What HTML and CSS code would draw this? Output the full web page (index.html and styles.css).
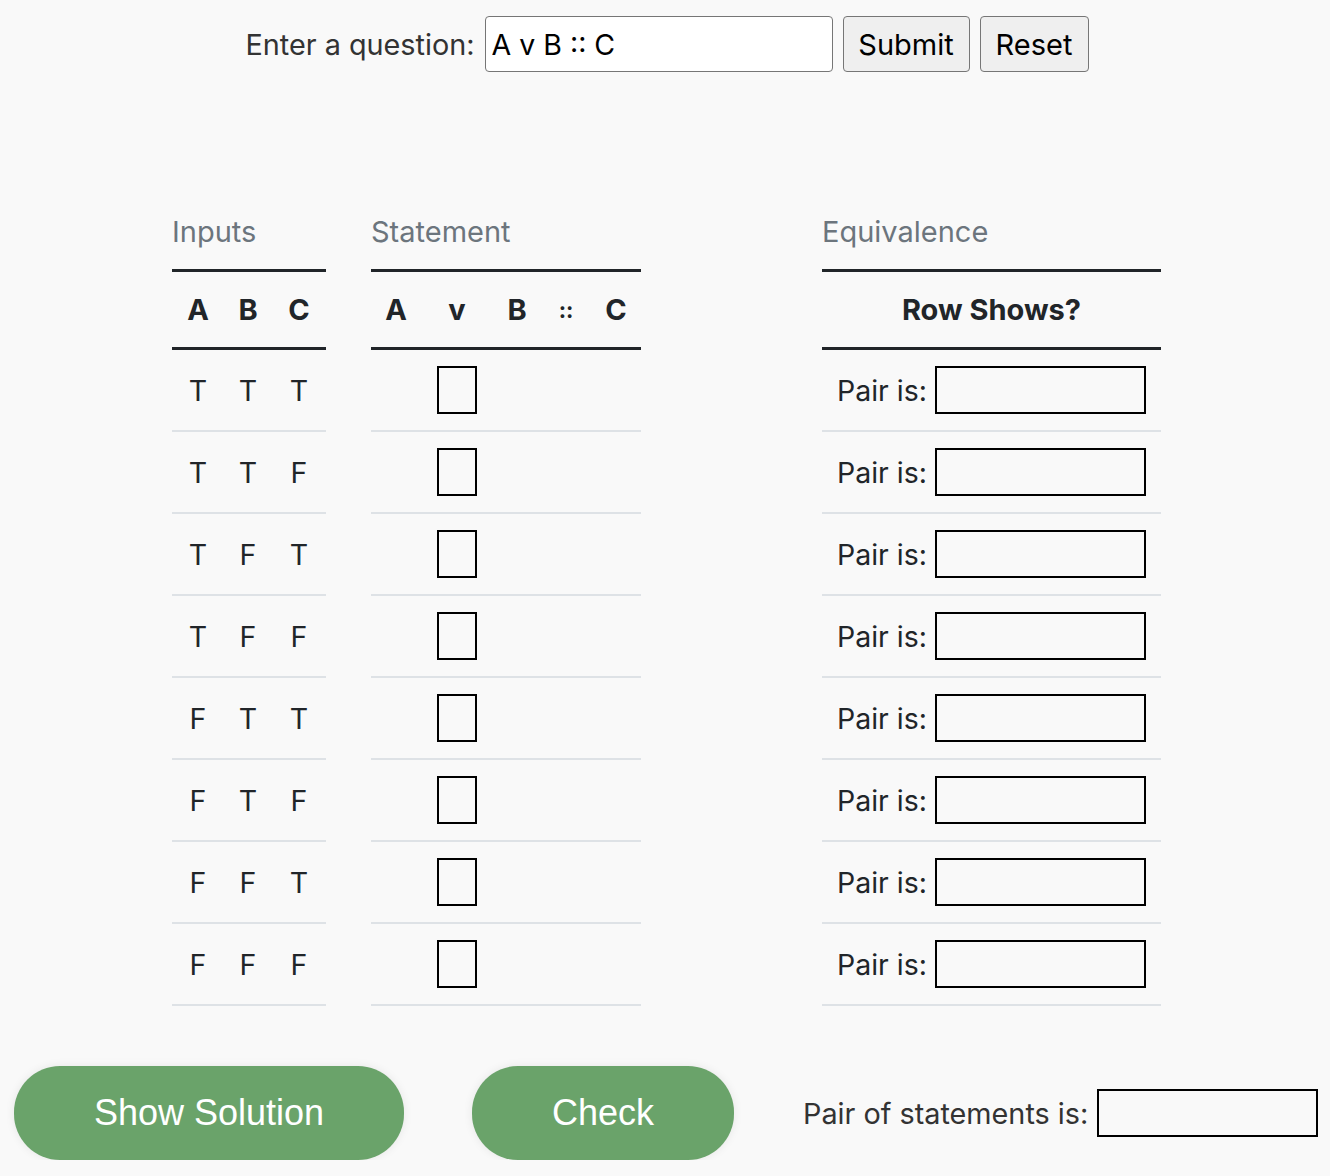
FILE: index.html
```html
<!DOCTYPE html>
<html lang="en">
<head>
<meta charset="utf-8">
<title>Truth Table</title>
<link rel="stylesheet" href="styles.css">
</head>
<body>
<form class="question-bar">
  <label class="question-label" for="q">Enter a question:</label>
  <input id="q" class="question-input" type="text" value="A v B :: C">
  <button type="button" class="plain-btn submit-btn">Submit</button>
  <button type="button" class="plain-btn reset-btn">Reset</button>
</form>

<div class="tables">
  <section class="panel panel-inputs">
    <h2 class="panel-title">Inputs</h2>
    <table class="tt">
      <thead><tr><th class="w52">A</th><th class="w48">B</th><th class="w54">C</th></tr></thead>
      <tbody>
        <tr><td>T</td><td>T</td><td>T</td></tr>
        <tr><td>T</td><td>T</td><td>F</td></tr>
        <tr><td>T</td><td>F</td><td>T</td></tr>
        <tr><td>T</td><td>F</td><td>F</td></tr>
        <tr><td>F</td><td>T</td><td>T</td></tr>
        <tr><td>F</td><td>T</td><td>F</td></tr>
        <tr><td>F</td><td>F</td><td>T</td></tr>
        <tr><td>F</td><td>F</td><td>F</td></tr>
      </tbody>
    </table>
  </section>

  <section class="panel panel-statement">
    <h2 class="panel-title">Statement</h2>
    <table class="tt">
      <thead><tr><th class="w50">A</th><th class="w72">v</th><th class="w48">B</th><th class="w50 op">::</th><th class="w50">C</th></tr></thead>
      <tbody>
        <tr><td></td><td><input class="cell-box" type="text"></td><td></td><td></td><td></td></tr>
        <tr><td></td><td><input class="cell-box" type="text"></td><td></td><td></td><td></td></tr>
        <tr><td></td><td><input class="cell-box" type="text"></td><td></td><td></td><td></td></tr>
        <tr><td></td><td><input class="cell-box" type="text"></td><td></td><td></td><td></td></tr>
        <tr><td></td><td><input class="cell-box" type="text"></td><td></td><td></td><td></td></tr>
        <tr><td></td><td><input class="cell-box" type="text"></td><td></td><td></td><td></td></tr>
        <tr><td></td><td><input class="cell-box" type="text"></td><td></td><td></td><td></td></tr>
        <tr><td></td><td><input class="cell-box" type="text"></td><td></td><td></td><td></td></tr>
      </tbody>
    </table>
  </section>

  <section class="panel panel-equiv">
    <h2 class="panel-title">Equivalence</h2>
    <table class="tt">
      <thead><tr><th>Row Shows?</th></tr></thead>
      <tbody>
        <tr><td class="pair-cell"><span class="pair-label">Pair is:</span><input class="pair-box" type="text"></td></tr>
        <tr><td class="pair-cell"><span class="pair-label">Pair is:</span><input class="pair-box" type="text"></td></tr>
        <tr><td class="pair-cell"><span class="pair-label">Pair is:</span><input class="pair-box" type="text"></td></tr>
        <tr><td class="pair-cell"><span class="pair-label">Pair is:</span><input class="pair-box" type="text"></td></tr>
        <tr><td class="pair-cell"><span class="pair-label">Pair is:</span><input class="pair-box" type="text"></td></tr>
        <tr><td class="pair-cell"><span class="pair-label">Pair is:</span><input class="pair-box" type="text"></td></tr>
        <tr><td class="pair-cell"><span class="pair-label">Pair is:</span><input class="pair-box" type="text"></td></tr>
        <tr><td class="pair-cell"><span class="pair-label">Pair is:</span><input class="pair-box" type="text"></td></tr>
      </tbody>
    </table>
  </section>
</div>

<div class="actions">
  <button type="button" class="green-btn solution-btn">Show Solution</button>
  <button type="button" class="green-btn check-btn">Check</button>
  <div class="final">
    <span class="final-label">Pair of statements is:</span>
    <input class="final-box" type="text">
  </div>
</div>
</body>
</html>
```

FILE: styles.css
```css
html, body {
  margin: 0;
  padding: 0;
  background: #f9f9f9;
}

body {
  font-family: "Inter", "Noto Sans", sans-serif;
  color: #212529;
}

.question-bar {
  display: flex;
  justify-content: center;
  align-items: center;
  gap: 10px;
  padding-top: 16px;
  padding-left: 4px;
  margin: 0;
}

.question-label {
  font-family: "Inter", sans-serif;
  font-size: 28.8px;
  color: #333;
}

.question-input {
  box-sizing: border-box;
  width: 348px;
  height: 56px;
  border: 1.5px solid #767676;
  border-radius: 4px;
  background: #fff;
  font-family: "Inter", sans-serif;
  font-size: 28.5px;
  color: #000;
  padding: 0 6px;
  outline: none;
}

.plain-btn {
  box-sizing: border-box;
  height: 56px;
  border: 1.5px solid #767676;
  border-radius: 4px;
  background: #efefef;
  font-family: "Inter", sans-serif;
  font-size: 29px;
  color: #000;
  padding: 0;
}

.submit-btn { width: 127px; }
.reset-btn { width: 109px; }

.tables {
  display: flex;
  align-items: flex-start;
  padding-left: 172px;
  margin-top: 139px;
}

.panel-inputs { width: 154px; }
.panel-statement { width: 270px; margin-left: 45px; }
.panel-equiv { width: 339px; margin-left: 181px; }

.panel-title {
  margin: 0 0 16px 0;
  font-size: 29px;
  font-weight: 400;
  line-height: 42px;
  color: #6c757d;
}

.tt {
  width: 100%;
  border-collapse: collapse;
  border-top: 3px solid #212529;
  table-layout: fixed;
}

.tt th {
  height: 75px;
  padding: 0;
  font-size: 29px;
  font-weight: 700;
  text-align: center;
  vertical-align: middle;
  border-bottom: 3px solid #212529;
}

.tt th.op {
  font-weight: 700;
  font-size: 22px;
}

.tt td {
  height: 80px;
  padding: 0;
  font-size: 28.5px;
  text-align: center;
  vertical-align: middle;
  border-bottom: 2px solid #dee2e6;
}

.w48 { width: 48px; }
.w50 { width: 50px; }
.w52 { width: 52px; }
.w54 { width: 54px; }
.w72 { width: 72px; }

.cell-box {
  box-sizing: border-box;
  display: block;
  margin: 0 auto;
  width: 40px;
  height: 48px;
  border: 2px solid #000;
  border-radius: 0;
  background: transparent;
  padding: 0;
  outline: none;
}

.tt td.pair-cell {
  text-align: left;
  padding-left: 15px;
}

.pair-label {
  display: inline-block;
  vertical-align: middle;
  margin-right: 8px;
}

.pair-box {
  box-sizing: border-box;
  width: 211px;
  height: 48px;
  vertical-align: middle;
  border: 2px solid #000;
  border-radius: 0;
  background: transparent;
  padding: 0;
  outline: none;
}

.actions {
  display: flex;
  align-items: center;
  padding-left: 14px;
  margin-top: 60px;
}

.green-btn {
  box-sizing: border-box;
  height: 94px;
  border: none;
  border-radius: 46px;
  background: #6aa36a;
  color: #fff;
  font-family: "Liberation Sans", Arial, sans-serif;
  font-size: 36px;
  box-shadow: 0 0 10px rgba(0, 0, 0, 0.08);
  padding: 0;
}

.solution-btn { width: 390px; }
.check-btn { width: 262px; margin-left: 68px; }

.final {
  display: flex;
  align-items: center;
  margin-left: 69px;
}

.final-label {
  font-size: 28.8px;
  color: #333;
  margin-right: 9px;
}

.final-box {
  box-sizing: border-box;
  width: 221px;
  height: 48px;
  border: 2px solid #000;
  border-radius: 0;
  background: transparent;
  padding: 0;
  outline: none;
}
```
